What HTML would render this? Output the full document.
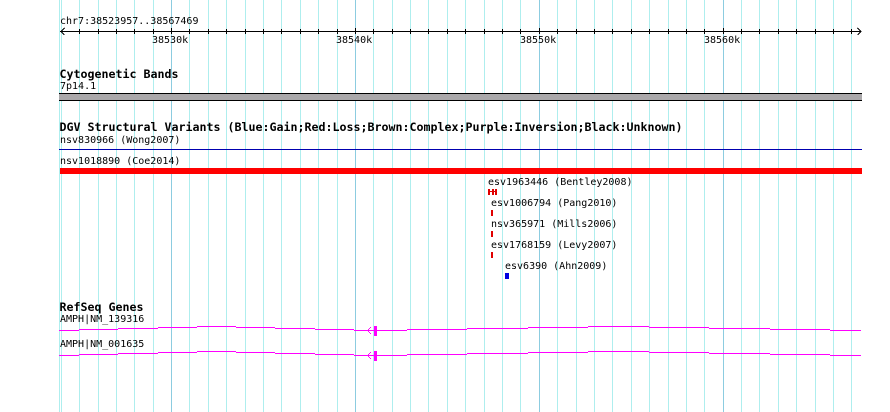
<!DOCTYPE html>
<html><head><meta charset="utf-8"><style>
html,body{margin:0;padding:0;background:#fff;width:890px;height:412px;overflow:hidden}
svg{display:block}
text{font-family:"DejaVu Sans Mono","Liberation Mono",monospace;font-size:10px;fill:#000;white-space:pre}
text.b{font-size:11.63px;font-weight:bold}
</style></head><body>
<svg width="890" height="412" viewBox="0 0 890 412" xmlns="http://www.w3.org/2000/svg" shape-rendering="crispEdges">
<path fill="none" stroke="#aeeeee" d="M59.5 0V412M61.5 0V412M79.5 0V412M98.5 0V412M116.5 0V412M134.5 0V412M153.5 0V412M189.5 0V412M208.5 0V412M226.5 0V412M245.5 0V412M263.5 0V412M281.5 0V412M300.5 0V412M318.5 0V412M337.5 0V412M373.5 0V412M392.5 0V412M410.5 0V412M428.5 0V412M447.5 0V412M465.5 0V412M484.5 0V412M502.5 0V412M520.5 0V412M557.5 0V412M576.5 0V412M594.5 0V412M612.5 0V412M631.5 0V412M649.5 0V412M668.5 0V412M686.5 0V412M704.5 0V412M741.5 0V412M759.5 0V412M778.5 0V412M796.5 0V412M815.5 0V412M833.5 0V412M851.5 0V412"/>
<path fill="none" stroke="#8ccce0" d="M171.5 0V412M355.5 0V412M539.5 0V412M723.5 0V412"/>
<path fill="none" stroke="#000" d="M60 31.5H861M64.5 28L61 31.5L64.5 35M857.5 28L861 31.5L857.5 35M79.5 29V34M98.5 29V34M116.5 29V34M134.5 29V34M153.5 29V34M171.5 28V34M189.5 29V34M208.5 29V34M226.5 29V34M245.5 29V34M263.5 29V34M281.5 29V34M300.5 29V34M318.5 29V34M337.5 29V34M355.5 28V34M373.5 29V34M392.5 29V34M410.5 29V34M428.5 29V34M447.5 29V34M465.5 29V34M484.5 29V34M502.5 29V34M520.5 29V34M539.5 28V34M557.5 29V34M576.5 29V34M594.5 29V34M612.5 29V34M631.5 29V34M649.5 29V34M668.5 29V34M686.5 29V34M704.5 29V34M723.5 28V34M741.5 29V34M759.5 29V34M778.5 29V34M796.5 29V34M815.5 29V34M833.5 29V34M851.5 29V34"/>
<text x="60" y="24">chr7:38523957..38567469</text>
<text x="152" y="43">38530k</text>
<text x="336" y="43">38540k</text>
<text x="520" y="43">38550k</text>
<text x="704" y="43">38560k</text>
<text class="b" x="59.5" y="78" textLength="119" lengthAdjust="spacing">Cytogenetic Bands</text>
<text x="60" y="89">7p14.1</text>
<rect x="59" y="93" width="803" height="8" fill="#000"/>
<rect x="59" y="94" width="803" height="6" fill="#aaa8aa"/>
<text class="b" x="59.5" y="131" textLength="623" lengthAdjust="spacing">DGV Structural Variants (Blue:Gain;Red:Loss;Brown:Complex;Purple:Inversion;Black:Unknown)</text>
<text x="60" y="143">nsv830966 (Wong2007)</text>
<rect x="59" y="149" width="803" height="1" fill="#0000b0"/>
<text x="60" y="164">nsv1018890 (Coe2014)</text>
<rect x="60" y="168" width="802" height="6" fill="#f00"/>
<text x="488" y="185">esv1963446 (Bentley2008)</text>
<path fill="#e00000" d="M488 189h2v6h-2zM492 189h2v6h-2zM495 189h2v6h-2zM490 191h5v1h-5z"/>
<text x="491" y="206">esv1006794 (Pang2010)</text>
<rect x="491" y="210" width="2" height="6" fill="#e00000"/>
<text x="491" y="227">nsv365971 (Mills2006)</text>
<rect x="491" y="231" width="2" height="6" fill="#e00000"/>
<text x="491" y="248">esv1768159 (Levy2007)</text>
<rect x="491" y="252" width="2" height="6" fill="#e00000"/>
<text x="505" y="269">esv6390 (Ahn2009)</text>
<rect x="505" y="273" width="4" height="6" fill="#0000e0"/>
<text class="b" x="59.5" y="311" textLength="84" lengthAdjust="spacing">RefSeq Genes</text>
<text x="60" y="322">AMPH|NM_139316</text>
<text x="60" y="347">AMPH|NM_001635</text>
<g fill="#f0f">
<path d="M59 330h20v1H59zM79 329h39v1H79zM118 328h40v1h-40zM158 327h39v1h-39zM197 326h39v1h-39zM236 327h39v1h-39zM275 328h40v1h-40zM315 329h39v1h-39zM354 330h53v1h-53zM407 329h60v1h-60zM467 328h61v1h-61zM528 327h60v1h-60zM588 326h61v1h-61zM649 327h60v1h-60zM709 328h61v1h-61zM770 329h60v1h-60zM830 330h31v1h-31z"/>
<path d="M59 355h20v1H59zM79 354h39v1H79zM118 353h40v1h-40zM158 352h39v1h-39zM197 351h39v1h-39zM236 352h39v1h-39zM275 353h40v1h-40zM315 354h39v1h-39zM354 355h53v1h-53zM407 354h60v1h-60zM467 353h61v1h-61zM528 352h60v1h-60zM588 351h61v1h-61zM649 352h60v1h-60zM709 353h61v1h-61zM770 354h60v1h-60zM830 355h31v1h-31z"/>
<rect x="374" y="326" width="3" height="10"/>
<rect x="374" y="351" width="3" height="10"/>
<path d="M370 327h1v1h-1zM369 328h1v1h-1zM368 329h1v1h-1zM367 330h1v1h-1zM368 331h1v1h-1zM369 332h1v1h-1zM370 333h1v1h-1zM370 352h1v1h-1zM369 353h1v1h-1zM368 354h1v1h-1zM367 355h1v1h-1zM368 356h1v1h-1zM369 357h1v1h-1zM370 358h1v1h-1z"/>
</g>
</svg>
</body></html>
